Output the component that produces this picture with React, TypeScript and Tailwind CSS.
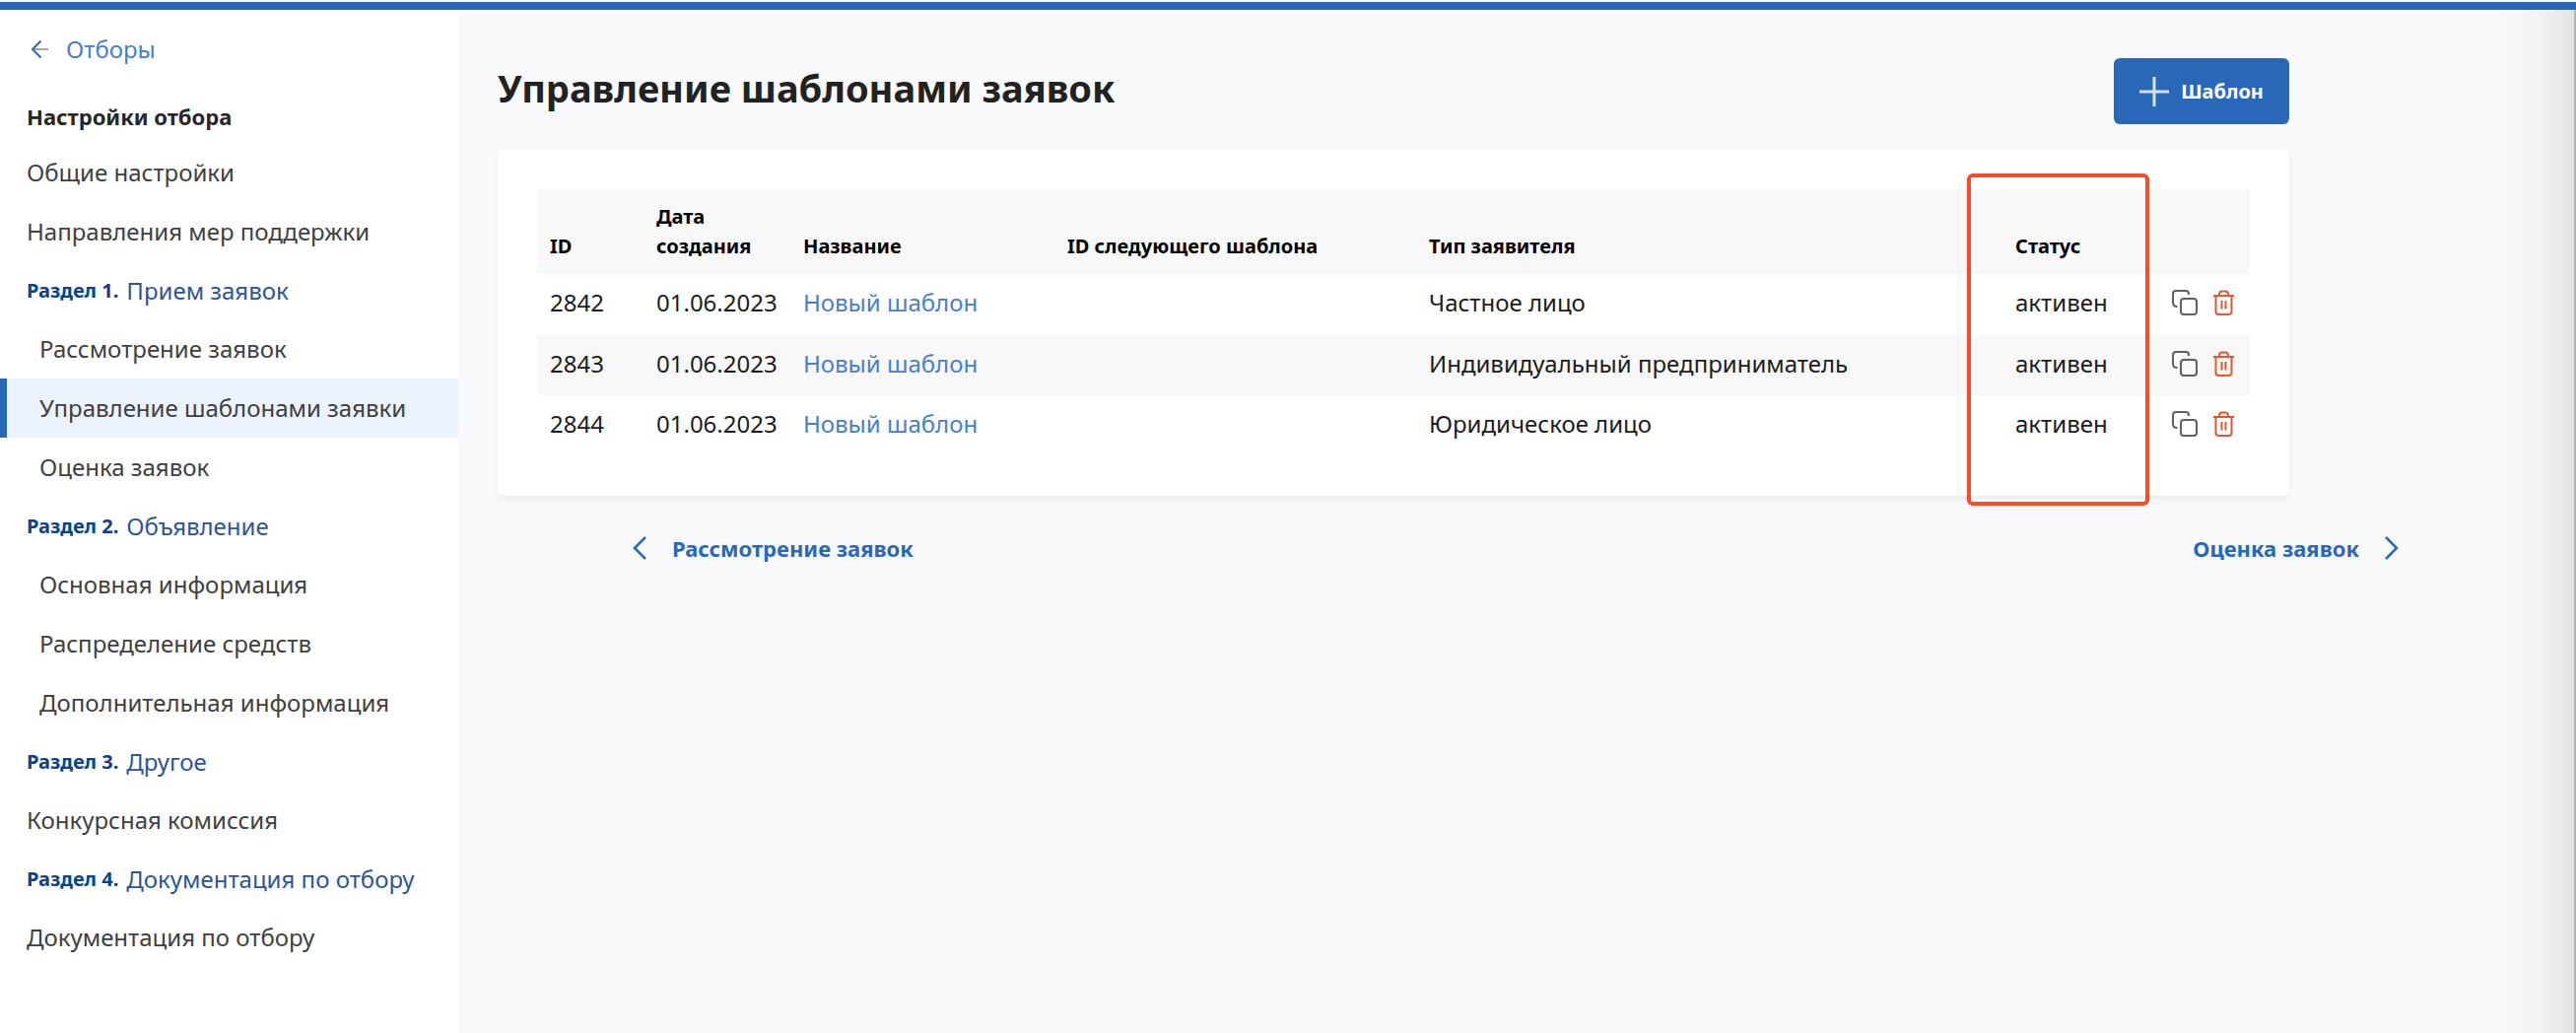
import React from "react";

type NavItem = { label: string; prefix?: string; nested?: boolean; active?: boolean };

const nav: NavItem[] = [
  { label: "Общие настройки" },
  { label: "Направления мер поддержки" },
  { prefix: "Раздел 1.", label: "Прием заявок" },
  { label: "Рассмотрение заявок", nested: true },
  { label: "Управление шаблонами заявки", nested: true, active: true },
  { label: "Оценка заявок", nested: true },
  { prefix: "Раздел 2.", label: "Объявление" },
  { label: "Основная информация", nested: true },
  { label: "Распределение средств", nested: true },
  { label: "Дополнительная информация", nested: true },
  { prefix: "Раздел 3.", label: "Другое" },
  { label: "Конкурсная комиссия" },
  { prefix: "Раздел 4.", label: "Документация по отбору" },
  { label: "Документация по отбору" },
];

const rows = [
  { id: "2842", date: "01.06.2023", name: "Новый шаблон", type: "Частное лицо", status: "активен" },
  { id: "2843", date: "01.06.2023", name: "Новый шаблон", type: "Индивидуальный предприниматель", status: "активен" },
  { id: "2844", date: "01.06.2023", name: "Новый шаблон", type: "Юридическое лицо", status: "активен" },
];

function ArrowLeftIcon() {
  return (
    <svg width="20" height="20" viewBox="0 0 20 20" fill="none" strokeWidth="2" aria-hidden="true">
      <path d="M4 10H18" stroke="#b5a58e" />
      <path d="M10.5 1.5L2 10L10.5 18.5" stroke="#2968b9" />
    </svg>
  );
}

function PlusIcon() {
  return (
    <svg width="30" height="30" viewBox="0 0 30 30" fill="none" stroke="#d3e1f3" strokeWidth="3" aria-hidden="true">
      <path d="M15 0V30M0 15H30" />
    </svg>
  );
}

function CopyIcon() {
  return (
    <svg width="26" height="26" viewBox="0 0 26 26" fill="none" stroke="#606060" strokeWidth="2" aria-hidden="true">
      <path d="M5.5 17H4.5Q1 16.5 1 13V4Q1 1 4 1H14Q17 1 17 4V5" />
      <rect x="9" y="9" width="16" height="16" rx="3" />
    </svg>
  );
}

function TrashIcon() {
  return (
    <svg width="21" height="26" viewBox="0 0 21 26" fill="none" stroke="#dd5a32" strokeWidth="2" aria-hidden="true">
      <path d="M0 6H21M6 6V4.5Q6 1.5 9 1.5H12Q15 1.5 15 4.5V6" />
      <path d="M2.5 6V22Q2.5 25 5.5 25H15.5Q18.5 25 18.5 22V6" />
      <path d="M8.5 11V19.5M12.5 11V19.5" />
    </svg>
  );
}

function Chevron({ right }: { right?: boolean }) {
  return (
    <svg width="14" height="24" viewBox="0 0 14 24" fill="none" stroke="#2968b9" strokeWidth="2.5" aria-hidden="true">
      <path d={right ? "M1 1L12 12L1 23" : "M13 1L2 12L13 23"} />
    </svg>
  );
}

function Sidebar() {
  return (
    <aside className="w-[465px] shrink-0 bg-white pt-5">
      <a href="#selections" className="ml-[31px] flex h-10 w-fit items-center gap-4 text-[24px] text-[#4680cb]">
        <ArrowLeftIcon />
        Отборы
      </a>
      <h2 className="mt-[27px] pl-[27px] text-[22px] leading-[42px] font-bold text-[#262626]">
        Настройки отбора
      </h2>
      <nav className="mt-[6px]" aria-label="Настройки отбора">
        <ul>
          {nav.map((item, i) => (
            <li key={i}>
              {item.prefix ? (
                <a href={"#item-" + i} className="flex h-[59px] items-center gap-2 pl-[27px] text-[24px] text-[#2c5597]">
                  <b className="text-[20px] font-bold text-[#0f4189]">{item.prefix}</b>
                  {item.label}
                </a>
              ) : (
                <a
                  href={"#item-" + i}
                  aria-current={item.active ? "page" : undefined}
                  className={
                    "flex h-15 items-center text-[24px] text-[#404040] " +
                    (item.active
                      ? "border-l-7 border-[#2968b9] bg-[#ebf3ff] pl-[33px]"
                      : item.nested
                        ? "pl-10"
                        : "pl-[27px]")
                  }
                >
                  {item.label}
                </a>
              )}
            </li>
          ))}
        </ul>
      </nav>
    </aside>
  );
}

function TemplatesTable() {
  const th = "px-[13px] py-[13px] text-left align-bottom font-bold";
  const td = "px-[13px] pb-1";
  return (
    <table className="w-full table-fixed border-collapse text-[#1c1c1c]">
      <colgroup>
        <col className="w-[108px]" />
        <col className="w-[149px]" />
        <col className="w-[268px]" />
        <col className="w-[367px]" />
        <col />
        <col className="w-[159px]" />
        <col className="w-[92px]" />
      </colgroup>
      <thead className="bg-[#f8f8f8] text-[20px] leading-[30px] text-black">
        <tr>
          <th className={th}>ID</th>
          <th className={th}>Дата создания</th>
          <th className={th}>Название</th>
          <th className={th}>ID следующего шаблона</th>
          <th className={th}>Тип заявителя</th>
          <th className={th}>Статус</th>
          <td />
        </tr>
      </thead>
      <tbody className="text-[24px] leading-[30px]">
        {rows.map((row) => (
          <tr key={row.id} className="h-[62px] even:h-[61px] even:bg-[#f8f8f8]">
            <td className={td}>{row.id}</td>
            <td className="pb-1 pl-[13px] whitespace-nowrap">{row.date}</td>
            <td className={td}>
              <a href={"#template-" + row.id} className="text-[#4680cb]">{row.name}</a>
            </td>
            <td className={td} />
            <td className={td}>{row.type}</td>
            <td className={td + " whitespace-nowrap"}>{row.status}</td>
            <td className="pb-1 pl-[13px]">
              <div className="flex items-center gap-4">
                <button type="button" aria-label="Копировать"><CopyIcon /></button>
                <button type="button" aria-label="Удалить"><TrashIcon /></button>
              </div>
            </td>
          </tr>
        ))}
      </tbody>
    </table>
  );
}

export default function App() {
  return (
    <div className="relative flex min-h-screen flex-col bg-[#f8f9fb] font-['Noto_Sans',sans-serif]">
      <div className="h-2.5 shrink-0 border-t-2 border-white bg-[#2968b9]" />
      <div className="flex grow">
        <Sidebar />
        <main className="min-w-0 grow">
          <div className="pr-[291px] pl-10">
            <header className="flex items-start justify-between pt-[49px]">
              <h1 className="text-[38px] leading-[60px] font-bold text-[#222]">Управление шаблонами заявок</h1>
              <button
                type="button"
                className="flex h-[67px] items-center gap-3 rounded-md bg-[#2968b9] px-[26px] text-[20px] font-bold text-white"
              >
                <PlusIcon />
                Шаблон
              </button>
            </header>
            <section className="relative mt-[26px] rounded-md bg-white px-10 py-10 shadow-[0_3px_6px_rgba(0,0,0,0.06)]">
              <TemplatesTable />
              <div className="pointer-events-none absolute top-6 right-[142px] -bottom-[10px] w-[185px] rounded-md border-4 border-[#fb4a25]" />
            </section>
          </div>
          <div className="mt-8 flex justify-between pr-[180px] pl-[177px] text-[22px] leading-[42px] font-bold text-[#2968b9]">
            <a href="#review" className="flex items-center gap-[26px]">
              <Chevron />
              Рассмотрение заявок
            </a>
            <a href="#rating" className="flex items-center gap-[26px]">
              Оценка заявок
              <Chevron right />
            </a>
          </div>
        </main>
      </div>
      <div className="pointer-events-none absolute top-2.5 right-0 bottom-0 w-20 border-r-2 border-[#b4b6b8] bg-linear-to-r from-transparent via-black/2 to-black/9" />
    </div>
  );
}
